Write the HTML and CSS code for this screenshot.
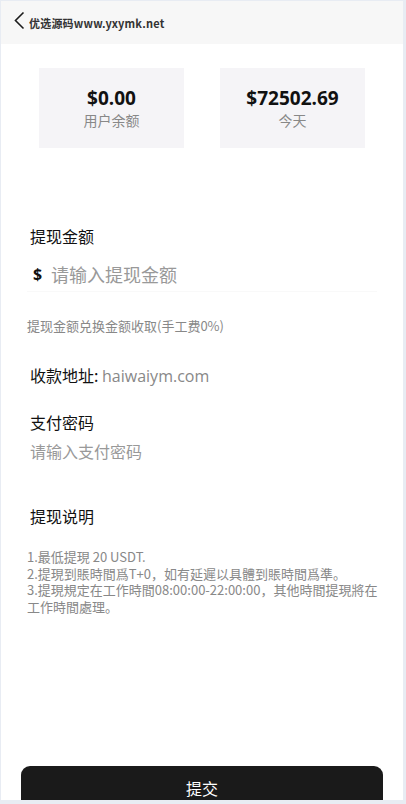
FILE: index.html
```html
<!DOCTYPE html>
<html lang="zh-CN">
<head>
  <meta charset="UTF-8">
  <meta name="viewport" content="width=device-width, initial-scale=1.0">
  <title>提现</title>
  <link rel="stylesheet" href="styles.css">
</head>
<body>
  <div class="app">
    <header class="nav">
      <svg class="nav__back" width="12" height="20" viewBox="0 0 12 20">
        <polyline points="9.5,1.5 1.5,9.5 9.5,17.5" fill="none" stroke="#1c1c1c" stroke-width="1.6"/>
      </svg>
      <span class="nav__title">优选源码www.yxymk.net</span>
    </header>

    <section class="stats">
      <div class="stat__box">
        <div class="stat__num">$0.00</div>
        <div class="stat__label">用户余额</div>
      </div>
      <div class="stat__box">
        <div class="stat__num">$72502.69</div>
        <div class="stat__label">今天</div>
      </div>
    </section>

    <section class="form">
      <div class="field__label field__label--amount">提现金额</div>
      <div class="amount__row">
        <span class="amount__sign">$</span>
        <span class="amount__input">请输入提现金额</span>
      </div>
      <div class="field__tip">提现金额兑换金额收取(手工费0%)</div>

      <div class="address__row">收款地址: <span class="address__val">haiwaiym.com</span></div>

      <div class="field__label field__label--pwd">支付密码</div>
      <div class="pwd__input">请输入支付密码</div>

      <div class="field__label field__label--note">提现说明</div>
      <div class="note__text">
        1.最低提現 20 USDT.<br>
        2.提現到賬時間爲T+0，如有延遲以具體到賬時間爲準。<br>
        3.提現規定在工作時間08:00:00-22:00:00，其他時間提現將在工作時間處理。
      </div>
    </section>

    <div class="spacer"></div>
    <div class="btn__submit">提交</div>
  </div>
</body>
</html>
```

FILE: styles.css
```css
* {
  margin: 0;
  padding: 0;
  box-sizing: border-box;
}

body {
  background: #e8ecf3;
  font-family: "Noto Sans CJK SC", "Noto Sans", sans-serif;
  color: #111;
}

.app {
  display: flex;
  flex-direction: column;
  margin: 1px 3px 0 1px;
  height: 799px;
  background: #fff;
  overflow: hidden;
}

.nav {
  display: flex;
  align-items: center;
  height: 43px;
  padding-left: 13px;
  background: #f7f7f7;
}

.nav__back {
  display: block;
  margin-top: -4px;
}

.nav__title {
  margin-left: 3px;
  font-size: 11px;
  font-weight: 700;
  color: #333;
  letter-spacing: 0.2px;
}

.stats {
  display: flex;
  justify-content: space-between;
  padding: 24px 38px 0;
}

.stat__box {
  display: flex;
  flex-direction: column;
  align-items: center;
  justify-content: center;
  width: 145px;
  height: 80px;
  background: #f5f4f7;
}

.stat__num {
  font-family: "Open Sans", "Noto Sans", sans-serif;
  font-size: 19px;
  font-weight: 700;
  line-height: 24px;
  color: #111;
}

.stat__label {
  font-size: 14px;
  line-height: 20px;
  color: #888;
}

.form {
  padding: 0 26px;
}

.field__label {
  padding-left: 3px;
  font-size: 16px;
  line-height: 22px;
  color: #111;
}

.field__label--amount {
  margin-top: 77px;
}

.amount__row {
  display: flex;
  align-items: center;
  height: 36px;
  margin-top: 9px;
  padding-left: 6px;
  border-bottom: 1px solid #f9f9f9;
}

.amount__sign {
  font-family: "Open Sans", sans-serif;
  font-size: 16px;
  font-weight: 700;
  width: 18px;
}

.amount__input {
  font-size: 18px;
  color: #999;
}

.field__tip {
  margin-top: 25px;
  font-size: 13px;
  line-height: 18px;
  color: #888;
}

.address__row {
  margin-top: 28px;
  padding-left: 3px;
  font-size: 16px;
  line-height: 24px;
  color: #111;
}

.address__val {
  font-family: "Open Sans", "Noto Sans", sans-serif;
  color: #888;
}

.field__label--pwd {
  margin-top: 23px;
}

.pwd__input {
  margin-top: 7px;
  padding-left: 3px;
  font-size: 16px;
  line-height: 22px;
  color: #999;
}

.field__label--note {
  margin-top: 43px;
}

.note__text {
  margin-top: 22px;
  margin-right: -10px;
  font-size: 13px;
  line-height: 16.5px;
  color: #888;
}

.spacer {
  flex: 1;
}

.btn__submit {
  flex-shrink: 0;
  height: 44px;
  margin: 0 20px -10px;
  border-radius: 9px;
  background: #1a1a1a;
  color: #fff;
  font-size: 16px;
  line-height: 44px;
  text-align: center;
}
```
